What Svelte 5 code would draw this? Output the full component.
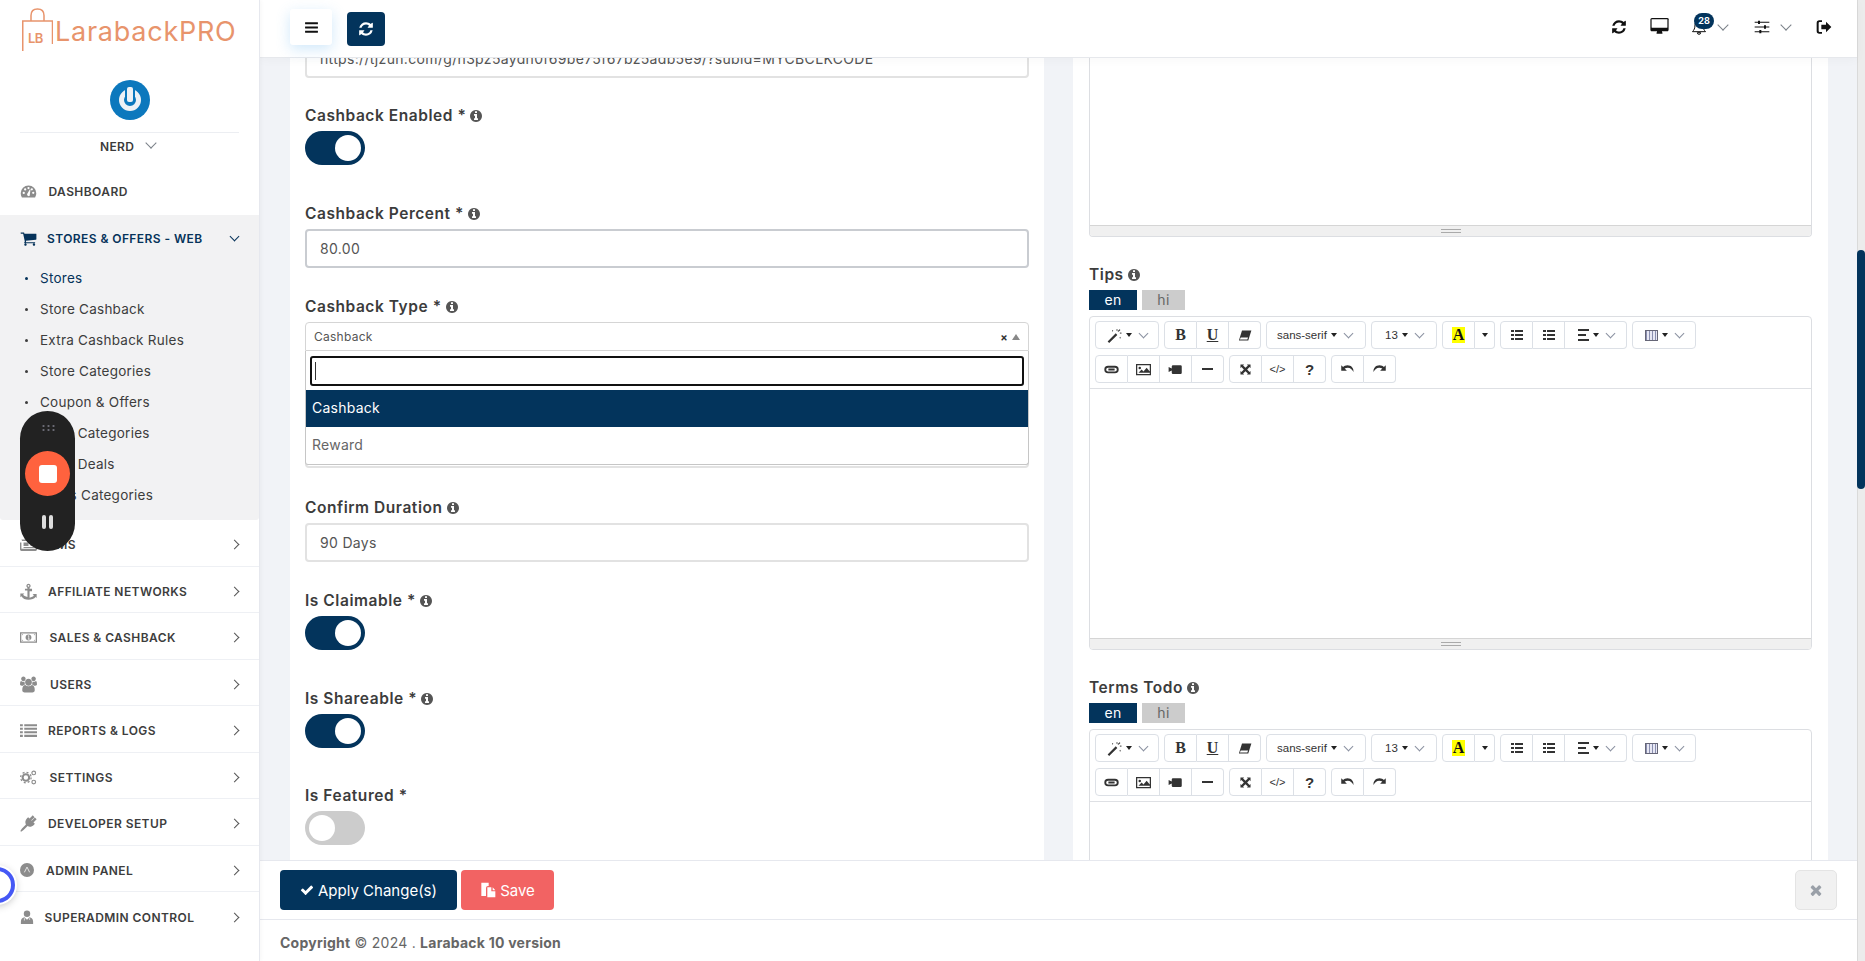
<script>
  const I = {
    info: ['0 0 1792 1792','M1152 1376v-160q0-14-9-23t-23-9h-96v-512q0-14-9-23t-23-9h-320q-14 0-23 9t-9 23v160q0 14 9 23t23 9h96v320h-96q-14 0-23 9t-9 23v160q0 14 9 23t23 9h448q14 0 23-9t9-23zm-128-896v-160q0-14-9-23t-23-9h-192q-14 0-23 9t-9 23v160q0 14 9 23t23 9h192q14 0 23-9t9-23zm640 416q0 209-103 385.5t-279.5 279.5-385.5 103-385.5-103-279.5-279.5-103-385.5 103-385.5 279.5-279.5 385.5-103 385.5 103 279.5 279.5 103 385.5z'],
    refresh: ['0 0 1792 1792','M1639 1056q0 5-1 7-64 268-268 434.5t-478 166.5q-146 0-282.5-55t-243.5-157l-129 129q-19 19-45 19t-45-19-19-45v-448q0-26 19-45t45-19h448q26 0 45 19t19 45-19 45l-137 137q71 66 161 102t187 36q134 0 250-65t186-179q11-17 53-117 8-23 30-23h192q13 0 22.5 9.5t9.5 22.5zm25-800v448q0 26-19 45t-45 19h-448q-26 0-45-19t-19-45 19-45l138-138q-148-137-349-137-134 0-250 65t-186 179q-11 17-53 117-8 23-30 23h-199q-13 0-22.5-9.5t-9.5-22.5v-7q65-268 270-434.5t480-166.5q146 0 284 55.5t245 156.5l130-129q19-19 45-19t45 19 19 45z'],
    bars: ['0 0 1792 1792','M1664 1344v128q0 26-19 45t-45 19h-1408q-26 0-45-19t-19-45v-128q0-26 19-45t45-19h1408q26 0 45 19t19 45zm0-512v128q0 26-19 45t-45 19h-1408q-26 0-45-19t-19-45v-128q0-26 19-45t45-19h1408q26 0 45 19t19 45zm0-512v128q0 26-19 45t-45 19h-1408q-26 0-45-19t-19-45v-128q0-26 19-45t45-19h1408q26 0 45 19t19 45z'],
    cart: ['0 0 1792 1792','M704 1536q0 52-38 90t-90 38-90-38-38-90 38-90 90-38 90 38 38 90zm896 0q0 52-38 90t-90 38-90-38-38-90 38-90 90-38 90 38 38 90zm128-1088v512q0 24-16.5 42.5t-40.5 21.5l-1044 122q13 60 13 70 0 16-24 64h920q26 0 45 19t19 45-19 45-45 19h-1024q-26 0-45-19t-19-45q0-11 8-31.5t16-36 21.5-40 15.5-29.5l-177-823h-204q-26 0-45-19t-19-45 19-45 45-19h256q16 0 28.5 6.5t19.5 15.5 13 24.5 8 26 5.5 29.5 4.5 26h1201q26 0 45 19t19 45z'],
    check: ['0 0 1792 1792','M1671 566q0 40-28 68l-724 724-136 136q-28 28-68 28t-68-28l-136-136-362-362q-28-28-28-68t28-68l136-136q28-28 68-28t68 28l294 295 656-657q28-28 68-28t68 28l136 136q28 28 28 68z'],
    times: ['0 0 1792 1792','M1490 1322q0 40-28 68l-136 136q-28 28-68 28t-68-28l-294-294-294 294q-28 28-68 28t-68-28l-136-136q-28-28-28-68t28-68l294-294-294-294q-28-28-28-68t28-68l136-136q28-28 68-28t68 28l294 294 294-294q28-28 68-28t68 28l136 136q28 28 28 68t-28 68l-294 294 294 294q28 28 28 68z'],
    users: ['0 0 1920 1792','M593 896q-162 5-265 128h-134q-82 0-138-40.5t-56-118.5q0-353 124-353 6 0 43.5 21t97.5 42.5 119 21.5q67 0 133-23-5 37-5 66 0 139 81 256zm1071 637q0 120-73 189.5t-194 69.5h-874q-121 0-194-69.5t-73-189.5q0-53 3.5-103.5t14-109 26.5-108.5 43-97.5 62-81 85.5-53.5 111.5-20q10 0 43 21.5t73 48 107 48 135 21.5 135-21.5 107-48 73-48 43-21.5q61 0 111.5 20t85.5 53.5 62 81 43 97.5 26.5 108.5 14 109 3.5 103.5zm-1024-1277q0 106-75 181t-181 75-181-75-75-181 75-181 181-75 181 75 75 181zm704 384q0 159-112.5 271.5t-271.5 112.5-271.5-112.5-112.5-271.5 112.5-271.5 271.5-112.5 271.5 112.5 112.5 271.5zm576 225q0 78-56 118.5t-138 40.5h-134q-103-123-265-128 81-117 81-256 0-29-5-66 66 23 133 23 59 0 119-21.5t97.5-42.5 43.5-21q124 0 124 353zm-128-609q0 106-75 181t-181 75-181-75-75-181 75-181 181-75 181 75 75 181z'],
    desktop: ['0 0 1920 1792','M1792 992v-832q0-13-9.5-22.5t-22.5-9.5h-1600q-13 0-22.5 9.5t-9.5 22.5v832q0 13 9.5 22.5t22.5 9.5h1600q13 0 22.5-9.5t9.5-22.5zm128-832v1088q0 66-47 113t-113 47h-544q0 37 16 77.5t32 71 16 43.5q0 26-19 45t-45 19h-512q-26 0-45-19t-19-45q0-14 16-44t32-70 16-78h-544q-66 0-113-47t-47-113v-1088q0-66 47-113t113-47h1632q66 0 113 47t47 113z'],
    gauge: ['0 0 24 24','M12 3.5A11 11 0 0 0 1 14.5c0 2.2.6 4.2 1.7 6h18.6a11 11 0 0 0 1.7-6 11 11 0 0 0-11-11zM5.3 15.6a1.6 1.6 0 1 1 0-3.2 1.6 1.6 0 0 1 0 3.2zm2-5a1.6 1.6 0 1 1 0-3.2 1.6 1.6 0 0 1 0 3.2zm4.7-1.9a1.6 1.6 0 1 1 0-3.2 1.6 1.6 0 0 1 0 3.2zm1.7 9.2a2.2 2.2 0 0 1-3.6-2.3l3.7-6.6 1 .3zm3-7.4a1.6 1.6 0 1 1 0-3.2 1.6 1.6 0 0 1 0 3.2zm2 5a1.6 1.6 0 1 1 0-3.2 1.6 1.6 0 0 1 0 3.2z'],
    news: ['0 0 24 24','M2 5h20a2 2 0 0 1 2 2v12a2 2 0 0 1-2 2H2a2 2 0 0 1-2-2V9h2v9h20V7H3zM5 9h7v5H5zM14 9h7v1.5h-7zM14 12h7v1.5h-7zM5 15.5h16V17H5z'],
    anchor: ['0 0 24 24','M12 1a3 3 0 0 0-1.500 5.600V8H7v2.500h3.500v9.300c-2.900-.3-5.300-1.600-6-3.400l1.700-1.700H.5v5.500l1.600-1.600C3.800 22 7.600 23.500 12 23.500s8.200-1.500 9.900-3.900l1.600 1.600v-5.500h-5.700l1.700 1.700c-.7 1.800-3.100 3.100-6 3.400v-9.300H17V8h-3.500V6.600A3 3 0 0 0 12 1zm0 1.800a1.200 1.200 0 1 1 0 2.400 1.200 1.200 0 0 1 0-2.400z'],
    money: ['0 0 26 24','M0 4h26v16H0zm2 2v12h22V6zm11 1.500c2.600 0 4.500 2 4.500 4.500s-1.900 4.500-4.500 4.500-4.500-2-4.500-4.500 1.900-4.500 4.500-4.500zM3 7v2l2-2zM23 7h-2l2 2zM3 15v2h2zM23 15l-2 2h2zM12 9v1h1v4h-1v1h3v-1h-1V9z'],
    list: ['0 0 24 24','M0 3h4v3H0zM6 3h18v3H6zM0 8h4v3H0zM6 8h18v3H6zM0 13h4v3H0zM6 13h18v3H6zM0 18h4v3H0zM6 18h18v3H6z'],
    plug: ['0 0 24 24','M23.500 6 19 10.500l2 2-1.500 1.500c-2.500 2.500-6 3.200-8.800 1.600L5 21.200 1.500 23.500l-1-1L2.800 19l5.600-5.700C6.800 10.500 7.500 7 10 4.500L11.500 3l2 2L18 .5 20.500 3 16 7.500l.5.5L21 3.500z'],
    logout: ['0 0 24 24','M9 4.500H5.500A1.500 1.500 0 0 0 4 6v12a1.500 1.500 0 0 0 1.500 1.500H9v2.500H5A4 4 0 0 1 1 18V6a4 4 0 0 1 4-4h4zM15 4l8 8-8 8v-4.500H8v-7h7z'],
    doc: ['0 0 24 24','M2 1h11v5h-1a3 3 0 0 0-3 3v12H2zM11 8h6v6h6v9H11zM19 8l4 4.500h-4z'],
    eraser: ['0 0 24 24','M8 4h15l-5 16H3zM6 15l-1.500 3.500h12l1.200-3.500z'],
    magic: ['0 0 24 24','M1 21.500 14 8.500l2.500 2.500L3.500 24zM16 1l1 2-1 2-1-2zM22 7l2 1-2 1-2-1zM9 3l1 1.500L9 6 8 4.500zM21 14l1 1.500-1 1.500-1-1.500zM20 2l1.500 1-3 3L17 5z'],
    link: ['0 0 24 24','M6.500 6h5.500v3H6.500a3 3 0 0 0 0 6H12v3H6.500a6 6 0 0 1 0-12zM12 6h5.500a6 6 0 0 1 0 12H12v-3h5.500a3 3 0 0 0 0-6H12zM7 10.500h10v3H7z'],
    picture: ['0 0 24 24','M0 3h24v18H0zm2 2v14h20V5zM4 17l5-5 3 3 5-6 5 6v2zM6 7.500a2 2 0 1 1 0 4 2 2 0 0 1 0-4z'],
    video: ['0 0 24 24','M8 5h12a2 2 0 0 1 2 2v10a2 2 0 0 1-2 2H8a2 2 0 0 1-2-2v-3.500L1 16V8l5 2.500V7a2 2 0 0 1 2-2z'],
    full: ['0 0 24 24','M1 1h8L6.800 3.200 12 8.400l5.200-5.200L15 1h8v8l-2.200-2.200L15.600 12l5.200 5.200L23 15v8h-8l2.200-2.200L12 15.600l-5.200 5.200L9 23H1v-8l2.200 2.200L8.400 12 3.200 6.800 1 9z'],
    undo: ['0 0 24 24','M2 5v9h9l-3.500-3.500C9 9.500 10.500 9 12.500 9c4 0 7 2.500 9 7 .8-6.500-3.500-11-9.500-11-3 0-5.500 1.200-7 2.800z'],
    redo: ['0 0 24 24','M22 5v9h-9l3.500-3.500C15 9.500 13.500 9 11.500 9c-4 0-7 2.500-9 7-.8-6.500 3.500-11 9.500-11 3 0 5.500 1.200 7 2.800z']
  };
  const rows = [
    ['news','CMS',10],
    ['anchor','AFFILIATE NETWORKS',11],
    ['money','SALES & CASHBACK',12.5],
    ['users','USERS',13],
    ['list','REPORTS & LOGS',11],
    ['cogs','SETTINGS',12.5],
    ['plug','DEVELOPER SETUP',11],
    ['admin','ADMIN PANEL',12],
    ['md','SUPERADMIN CONTROL',10.5]
  ];
  const sub = ['Stores','Store Cashback','Extra Cashback Rules','Store Categories','Coupon & Offers','Offer Categories','Offer Deals','Deals Categories'];
</script>

{#snippet ic(name, cls)}
  <svg class={cls} viewBox={I[name][0]} aria-hidden="true"><path d={I[name][1]} /></svg>
{/snippet}

{#snippet infoLabel(text, info)}
  <div class="label"><span class="ltext">{text}</span>{#if info}{@render ic('info','info')}{/if}</div>
{/snippet}

{#snippet editorToolbar()}
  <div class="toolbar">
    <div class="trow">
      <div class="grp">
        <span class="tb wide">{@render ic('magic','tico')}<i class="caret"></i><i class="chev"></i></span>
      </div>
      <div class="grp">
        <span class="tb"><b class="serif">B</b></span>
        <span class="tb"><b class="serif u">U</b></span>
        <span class="tb">{@render ic('eraser','tico')}</span>
      </div>
      <div class="grp">
        <span class="tb font"><span class="ft">sans-serif</span><i class="caret"></i><i class="chev"></i></span>
      </div>
      <div class="grp">
        <span class="tb size"><span class="ft">13</span><i class="caret"></i><i class="chev"></i></span>
      </div>
      <div class="grp">
        <span class="tb"><b class="serif hl">A</b></span>
        <span class="tb narrow"><i class="caret solo"></i></span>
      </div>
      <div class="grp">
        <span class="tb"><span class="ul"><i></i><i></i><i></i></span></span>
        <span class="tb"><span class="ul"><i></i><i></i><i></i></span></span>
        <span class="tb para"><span class="al"><i></i><i></i><i></i></span><i class="caret"></i><i class="chev"></i></span>
      </div>
      <div class="grp">
        <span class="tb wide"><span class="tbl"></span><i class="caret"></i><i class="chev"></i></span>
      </div>
    </div>
    <div class="trow">
      <div class="grp">
        <span class="tb">{@render ic('link','tico')}</span>
        <span class="tb">{@render ic('picture','tico')}</span>
        <span class="tb">{@render ic('video','tico')}</span>
        <span class="tb"><span class="hr"></span></span>
      </div>
      <div class="grp">
        <span class="tb">{@render ic('full','tico small')}</span>
        <span class="tb"><span class="code">&lt;/&gt;</span></span>
        <span class="tb"><b class="q">?</b></span>
      </div>
      <div class="grp">
        <span class="tb">{@render ic('undo','tico')}</span>
        <span class="tb">{@render ic('redo','tico')}</span>
      </div>
    </div>
  </div>
{/snippet}

<div class="app">
  <aside class="side">
    <div class="logo">
      <svg class="bag" viewBox="0 0 31 43" aria-hidden="true">
        <path d="M.75 43V13H9M9 13V7.500C9 3.500 11.500 1 15.500 1S22 3.500 22 7.500V13M9 13H22M22 13h8.500v23" />
      </svg>
      <span class="lb">LB</span>
      <span class="logotext">LarabackPRO</span>
    </div>
    <div class="avatar"><span class="avring"></span><span class="avbar"></span></div>
    <div class="user"><span>NERD</span><i class="chev big"></i></div>

    <a class="mi dash">{@render ic('gauge','mico g')}<span>DASHBOARD</span></a>
    <div class="open">
      <a class="mi active">{@render ic('cart','mico navy')}<span>STORES &amp; OFFERS - WEB</span><i class="arrow down"></i></a>
      <ul class="sub">
        {#each sub as s, i}
          <li class:cur={i === 0}>{s}</li>
        {/each}
      </ul>
    </div>
    <div class="rows">
      {#each rows as r}
        <a class="mi row">
          {#if r[0] === 'cogs'}
            <svg class="mico g" viewBox="0 0 26 24" aria-hidden="true"><g fill="none" stroke="#8c8c8c"><circle cx="9" cy="12" r="5" stroke-width="3.200"/><circle cx="9" cy="12" r="8" stroke-width="2" stroke-dasharray="3 3.300"/><circle cx="21" cy="5" r="2.800" stroke-width="1.800"/><circle cx="21" cy="19" r="2.800" stroke-width="1.800"/></g></svg>
          {:else if r[0] === 'admin'}
            <svg class="mico g mini" viewBox="0 0 24 24" aria-hidden="true"><circle cx="12" cy="12" r="12" fill="#8c8c8c"/><path d="M7.500 16 12 7l4.500 9" fill="none" stroke="#fff" stroke-width="1.300"/></svg>
          {:else if r[0] === 'md'}
            <svg class="mico g mini" viewBox="0 0 24 24" aria-hidden="true"><circle cx="12" cy="6.500" r="5.500" fill="#8c8c8c"/><path d="M1.500 24v-4c0-5 3-7 6-7.500l4.500 4 4.500-4c3 .5 6 2.500 6 7.500v4z" fill="#8c8c8c"/><path d="M7.500 14v4M16.500 14v3" stroke="#fff" stroke-width="1.200"/></svg>
          {:else}
            {@render ic(r[0],'mico g')}
          {/if}
          <span style:margin-left="{r[2]}px">{r[1]}</span><i class="arrow"></i>
        </a>
      {/each}
    </div>
  </aside>

  <div class="main">
    <header class="top">
      <span class="hbtn">{@render ic('bars','h14')}</span>
      <span class="rbtn">{@render ic('refresh','h16 white')}</span>
      <div class="tright">
        <span class="t ref">{@render ic('refresh','h16')}</span>
        <span class="t mon">{@render ic('desktop','h19')}</span>
        <span class="t bell">
          <svg class="h16" viewBox="0 0 24 24" aria-hidden="true"><path d="M12 2.500c-3.500 0-6 2.500-6 6 0 6-1.500 8-3.800 10.500h19.600C19.500 16.500 18 14.500 18 8.500c0-3.500-2.500-6-6-6zM9.500 20.500a2.500 2.500 0 0 0 5 0z" fill="none" stroke="#111" stroke-width="1.500"/></svg>
          <span class="badge">28</span>
          <i class="chev big"></i>
        </span>
        <span class="t slid">
          <svg class="h16" viewBox="0 0 24 24" aria-hidden="true"><path d="M1 5h22M1 12h22M1 19h22" stroke="#111" stroke-width="1.600"/><path d="M6 2.500h3v5H6zM15 9.500h3v5h-3zM8 16.500h3v5H8z" fill="#111"/></svg>
          <i class="chev big"></i>
        </span>
        <span class="t out">{@render ic('logout','h16')}</span>
      </div>
    </header>

    <div class="content">
      <section class="card left">
        <div class="grpf mb25 urlwrap">
          <div class="input"><span class="clip">https://tjzuh.com/g/n3pz5aydn0f69be75f67bz5adb5e9/?subid=MYCBCLKCODE</span></div>
        </div>
        <div class="grpf mb36">
          {@render infoLabel('Cashback Enabled *', true)}
          <span class="sw on"><span></span></span>
        </div>
        <div class="grpf mb26">
          {@render infoLabel('Cashback Percent *', true)}
          <div class="input hard">80.00</div>
        </div>
        <div class="grpf mb27 selgroup">
          {@render infoLabel('Cashback Type *', true)}
          <div class="select"><span>Cashback</span><em>×</em><i class="up"></i></div>
          <div class="ghost"></div>
          <div class="drop">
            <div class="search"><span class="cursor"></span></div>
            <div class="opt sel">Cashback</div>
            <div class="opt">Reward</div>
          </div>
        </div>
        <div class="grpf mb26">
          {@render infoLabel('Confirm Duration', true)}
          <div class="input">90 Days</div>
        </div>
        <div class="grpf mb36">
          {@render infoLabel('Is Claimable *', true)}
          <span class="sw on"><span></span></span>
        </div>
        <div class="grpf mb35">
          {@render infoLabel('Is Shareable *', true)}
          <span class="sw on"><span></span></span>
        </div>
        <div class="grpf">
          {@render infoLabel('Is Featured *', false)}
          <span class="sw"><span></span></span>
        </div>
      </section>

      <section class="card right">
        <div class="ed topEd">
          <div class="edbody"></div>
          <div class="status"><i></i></div>
        </div>
        <div class="block">
          {@render infoLabel('Tips', true)}
          <div class="tabs"><span class="tab act">en</span><span class="tab">hi</span></div>
          <div class="ed">
            {@render editorToolbar()}
            <div class="edbody tall"></div>
            <div class="status"><i></i></div>
          </div>
        </div>
        <div class="block">
          {@render infoLabel('Terms Todo', true)}
          <div class="tabs"><span class="tab act">en</span><span class="tab">hi</span></div>
          <div class="ed">
            {@render editorToolbar()}
            <div class="edbody tall"></div>
          </div>
        </div>
      </section>
    </div>

    <div class="actions">
      <span class="b apply">{@render ic('check','b14')}Apply Change(s)</span>
      <span class="b save">{@render ic('doc','b16')}Save</span>
      <span class="close">{@render ic('times','x16')}</span>
    </div>
    <footer class="foot"><b>Copyright</b> © 2024 . <b>Laraback 10 version</b></footer>
  </div>

  <div class="bar"><span></span></div>

  <div class="rec">
    <span class="dots"></span>
    <span class="stop"><span></span></span>
    <span class="pause"><i></i><i></i></span>
  </div>
  <div class="ring"></div>
</div>

<style>
  :global(body) { margin: 0; background: #f1f3f7; overflow: hidden; }
  .app { position: relative; width: 1865px; height: 961px; display: flex; overflow: hidden; font-family: Inter, "Noto Sans", sans-serif; color: #3a3a3a; }
  svg { fill: currentColor; display: block; flex: none; }
  i { display: block; font-style: normal; }

  .side { width: 259px; flex: none; background: #fff; border-right: 1px solid #e6e8ee; box-shadow: 1px 0 4px rgba(0,0,0,.04); z-index: 3; }
  .logo { position: relative; height: 80px; }
  .bag { position: absolute; left: 22px; top: 8px; width: 31px; height: 43px; fill: none; stroke: #e8946c; stroke-width: 1.500; }
  .lb { position: absolute; left: 28px; top: 30px; font-size: 13px; font-weight: 600; color: #e8946c; letter-spacing: -.5px; }
  .logotext { position: absolute; left: 55px; top: 15px; font-size: 27px; line-height: 34px; color: #e8946c; letter-spacing: .75px; }
  .avatar { position: relative; width: 40px; height: 40px; margin: 0 auto; border-radius: 50%; background: #0c78bd; }
  .avring { position: absolute; left: 9px; top: 9px; width: 22px; height: 22px; box-sizing: border-box; border-radius: 50%; border: 5px solid #eef2f6; }
  .avbar { position: absolute; left: 17px; top: 7px; width: 6px; height: 15px; background: #eef2f6; border-radius: 2px; box-shadow: 0 0 0 2px #0c78bd; }
  .user { margin: 12px 20px 0; height: 38px; border-top: 1px solid #eceef2; display: flex; align-items: center; gap: 13px; font-size: 12px; font-weight: 600; letter-spacing: .35px; padding: 0 0 10px 80px; box-sizing: border-box; white-space: nowrap; }
  .user .chev { margin-top: -7px; }

  .chev { width: 6px; height: 6px; border-right: 1px solid #7a8088; border-bottom: 1px solid #7a8088; transform: rotate(45deg); margin-top: -4px; }
  .chev.big { width: 7px; height: 7px; }
  a.mi { display: flex; align-items: center; text-decoration: none; color: #3d3d3d; font-size: 12px; font-weight: 600; letter-spacing: .42px; padding: 0 20px; box-sizing: border-box; white-space: nowrap; }
  a.mi.dash { height: 45px; padding-bottom: 2px; }
  .dash span { margin-left: 11.500px; }
  .open { background: #f2f2f3; height: 305px; border-radius: 0 0 3px 3px; }
  a.mi.active { height: 48px; color: #06335a; padding-bottom: 2px; }
  .active span { margin-left: 10px; }
  .mico { width: 17px; height: 17px; flex: none; }
  .g { color: #8c8c8c; }
  .navy { color: #06335a; }
  .arrow { margin-left: auto; margin-right: 1px; width: 6px; height: 6px; border-right: 1.200px solid #555; border-top: 1.200px solid #555; transform: rotate(45deg); }
  .arrow.down { transform: rotate(135deg); margin-top: -4px; margin-right: 1.500px; border-color: #06335a; }
  .sub { list-style: none; margin: 0; padding: 0 0 0 40px; }
  .sub li { position: relative; height: 31px; line-height: 31px; font-size: 13.500px; color: #3d3d3d; letter-spacing: .25px; }
  .sub li::before { content: ""; position: absolute; left: -15px; top: 14px; width: 3px; height: 3px; border-radius: 50%; background: #3d3d3d; }
  .sub li.cur { color: #06335a; }
  .sub li.cur::before { background: #06335a; }
  .rows { display: flex; flex-direction: column; }
  a.mi.row { height: 46.500px; border-bottom: 1px solid #eef0f4; padding-top: 4px; }
  .mi.row:last-child { border-bottom: 0; }
  .mico.mini { width: 14px; height: 14px; }

  .main { flex: 1; display: flex; flex-direction: column; min-width: 0; height: 961px; }
  .top { position: relative; z-index: 2; height: 58px; flex: none; background: #fff; border-bottom: 1px solid #e6e8ec; box-shadow: 0 2px 10px rgba(0,0,0,.03); box-sizing: border-box; display: flex; align-items: flex-start; padding: 0 0 0 30px; color: #111; }
  .hbtn { width: 42px; height: 36px; margin-top: 9px; background: #fff; border-radius: 3px; box-shadow: 0 4px 14px rgba(100,180,240,.3); display: flex; align-items: center; justify-content: center; }
  .rbtn { width: 38px; height: 34px; margin: 12px 0 0 15px; background: #03345c; border-radius: 4px; display: flex; align-items: center; justify-content: center; }
  .h16 { width: 16px; height: 16px; }
  .h14 { width: 15px; height: 15px; }
  .h19 { width: 19px; height: 17px; }
  .white { color: #fff; }
  .tright { margin-left: auto; position: relative; width: 260px; height: 58px; }
  .t { position: absolute; top: 19px; display: flex; align-items: center; }
  .ref { left: 14px; } .mon { left: 52.500px; top: 18px; } .bell { left: 94px; } .slid { left: 157px; } .out { left: 219px; }
  .badge { position: absolute; left: 3px; top: -6px; min-width: 20px; height: 16px; border-radius: 8px; background: #03345c; color: #fff; font-size: 9px; font-weight: 700; text-align: center; line-height: 16px; }
  .bell .chev { margin-left: 11.500px; }
  .slid .chev { margin-left: 11.500px; }

  .content { flex: 1; min-height: 0; overflow: hidden; display: flex; gap: 29px; padding: 0 29px 0 30px; align-items: stretch; }
  .card { background: #fff; box-sizing: border-box; flex: none; overflow: hidden; }
  .card.left { width: 754px; padding: 0 15px; }
  .card.right { width: 755px; padding: 0 16px; }
  .mb25 { margin-bottom: 25px; } .mb26 { margin-bottom: 26px; } .mb27 { margin-bottom: 27px; } .mb35 { margin-bottom: 35px; } .mb36 { margin-bottom: 36px; }
  .urlwrap { margin-top: -19px; height: 39px; }
  .label { height: 22px; box-sizing: border-box; padding-top: 2px; margin-bottom: 6px; font-size: 15.500px; font-weight: 600; letter-spacing: .55px; color: #3c3c3c; display: flex; align-items: center; white-space: nowrap; }
  .info { width: 14px; height: 14px; margin-left: 3px; margin-top: 1px; color: #555; }
  .input { height: 39px; box-sizing: border-box; border: 2px solid #e2e2e2; border-radius: 4px; padding: 0 13px; line-height: 35px; font-size: 14px; color: #555; letter-spacing: .33px; white-space: nowrap; overflow: hidden; }
  .input.hard { border-color: #c9ccd1; }
  .clip { white-space: nowrap; }
  .sw { display: block; position: relative; width: 60px; height: 34px; border-radius: 17px; background: #ccc; }
  .sw span { position: absolute; left: 4px; top: 4px; width: 26px; height: 26px; border-radius: 50%; background: #fff; }
  .sw.on { background: #03345c; }
  .sw.on span { left: 30px; }

  .selgroup { position: relative; height: 174px; }
  .select { height: 29px; box-sizing: border-box; border: 1px solid #d5d5d5; border-radius: 4px 4px 0 0; display: flex; align-items: center; padding: 0 8px; font-size: 12px; color: #555; letter-spacing: .25px; }
  .select em { margin-left: auto; font-style: normal; font-weight: 700; font-size: 11px; color: #333; margin-right: 4px; }
  .up { width: 0; height: 0; border-left: 4.500px solid transparent; border-right: 4.500px solid transparent; border-bottom: 6px solid #888; }
  .ghost { position: absolute; left: 0; right: 0; bottom: 0; height: 39px; box-sizing: border-box; border: 2px solid #e2e2e2; border-radius: 4px; }
  .drop { position: absolute; left: 0; right: 0; top: 57px; height: 114px; box-sizing: border-box; background: #fff; border: 1px solid #c6c6c6; border-top: 0; border-radius: 0 0 3px 3px; padding-top: 5px; }
  .search { margin: 0 4px 4px; height: 30px; box-sizing: border-box; border: 2px solid #111; border-radius: 3px; display: flex; align-items: center; padding-left: 3px; }
  .cursor { width: 1px; height: 18px; background: #333; }
  .opt { height: 37px; line-height: 35px; padding: 0 6px; font-size: 14px; color: #666; letter-spacing: .25px; }
  .opt.sel { background: #03345c; color: #fff; }

  .ed { border: 1px solid #dcdee2; border-radius: 4px; overflow: hidden; }
  .topEd { margin-top: -1px; height: 180px; box-sizing: border-box; display: flex; flex-direction: column; border-top: 0; border-radius: 0 0 4px 4px; }
  .topEd .edbody { flex: 1; }
  .edbody.tall { height: 249px; }
  .status { height: 10px; background: #f0f0f0; border-top: 1px solid #d5d5d5; display: flex; justify-content: center; align-items: center; }
  .status i { width: 20px; height: 4px; border-top: 1px solid #aaa; border-bottom: 1px solid #aaa; box-sizing: border-box; }
  .block { margin-top: 25px; }
  .tabs { display: flex; gap: 5px; margin-bottom: 6px; }
  .tab { width: 43px; height: 20px; line-height: 20px; text-align: center; background: #ccc; color: #666; font-size: 14px; letter-spacing: .3px; }
  .tab.act { width: 48px; background: #03345c; color: #fff; }
  .toolbar { display: flex; flex-direction: column; gap: 6px; padding: 4px 5px 5px; border-bottom: 1px solid #dee0e4; }
  .trow { display: flex; gap: 5px; align-items: flex-start; }
  .grp { display: flex; }
  .tb { width: 32px; height: 28px; box-sizing: border-box; border: 1px solid #dce0e6; border-left-width: 0; display: flex; align-items: center; justify-content: center; gap: 5px; color: #333; }
  .tb:first-child { width: 33px; border-left-width: 1px; border-radius: 4px 0 0 4px; }
  .tb:last-child { border-radius: 0 4px 4px 0; }
  .tb:only-child { border-radius: 4px; }
  .tb.wide { width: 64px; }
  .tb.font { width: 100px; justify-content: flex-start; padding-left: 10px; }
  .tb.size { width: 66px; }
  .tb.narrow { width: 20px; }
  .tb.para { width: 62px; }
  .tico { width: 15px; height: 15px; color: #333; }
  .tico.small { width: 11px; height: 11px; }
  .serif { font-family: "Liberation Serif", serif; font-size: 16px; color: #333; line-height: 1; }
  .u { text-decoration: underline; }
  .hl { background: #ff0; color: #111; padding: 0 1px; }
  .q { font-size: 15px; font-family: "Liberation Sans", sans-serif; }
  .code { font-family: "Liberation Sans", sans-serif; font-size: 11px; }
  .ft { font-family: "Liberation Sans", sans-serif; font-size: 11.500px; color: #333; }
  .caret { width: 0; height: 0; border-left: 3px solid transparent; border-right: 3px solid transparent; border-top: 4px solid #222; margin-left: -1px; }
  .caret.solo { margin: 0; }
  .tb .chev { border-color: #8a90a0; margin-top: -4px; margin-left: 3px; }
  .ul { display: flex; flex-direction: column; gap: 2px; width: 12px; }
  .ul i { height: 2px; background: linear-gradient(90deg, #333 0 3px, transparent 3px 4px, #333 4px); }
  .al { display: flex; flex-direction: column; gap: 3px; width: 11px; }
  .al i { height: 2px; background: #333; }
  .al i:nth-child(2) { width: 8px; }
  .tbl { width: 13px; height: 11px; box-sizing: border-box; border: 1px solid #667; background: repeating-linear-gradient(90deg, #8a8fb0 0 1px, #e8e8f4 1px 3px), #eee; }
  .hr { width: 11px; height: 2px; background: #333; }

  .actions { position: relative; z-index: 2; height: 60px; flex: none; box-sizing: border-box; background: #fff; border-top: 1px solid #e6e8ee; border-bottom: 1px solid #e6e8ee; display: flex; align-items: center; padding: 0 20px; gap: 4px; }
  .b { height: 40px; display: flex; align-items: center; justify-content: center; gap: 4px; border-radius: 4px; color: #fff; font-size: 15px; box-sizing: border-box; }
  .apply { width: 177px; background: #03345c; }
  .save { width: 93px; background: #f26363; }
  .b14 { width: 14px; height: 14px; }
  .b16 { width: 16px; height: 16px; }
  .close { margin-left: auto; width: 42px; height: 40px; box-sizing: border-box; background: #f1f1f1; border: 1px solid #e4e4e4; border-radius: 5px; display: flex; align-items: center; justify-content: center; color: #9aa0a8; }
  .x16 { width: 16px; height: 16px; }
  .foot { height: 41px; flex: none; background: #fff; padding-left: 20px; line-height: 45px; font-size: 14px; color: #666; letter-spacing: .24px; }
  .foot b { font-weight: 700; }

  .bar { width: 8px; flex: none; background: #ececec; border-left: 1px solid #dadada; box-sizing: border-box; display: flex; flex-direction: column; }
  .bar span { display: block; margin: 250px 0 0 -1px; height: 239px; background: #03345c; border-radius: 4px; }

  .rec { position: absolute; z-index: 5; left: 20px; top: 411px; width: 55px; height: 140px; border-radius: 28px; background: #222; }
  .dots { position: absolute; left: 21px; top: 13px; width: 14px; height: 8px; background-image: radial-gradient(circle, #6b6b75 1px, transparent 1.200px); background-size: 5px 4px; }
  .stop { position: absolute; left: 5px; top: 40px; width: 45px; height: 45px; border-radius: 50%; background: #ff623e; display: flex; align-items: center; justify-content: center; }
  .stop span { width: 18px; height: 18px; border-radius: 3px; background: #fff; }
  .pause { position: absolute; left: 22px; top: 104px; display: flex; gap: 3px; }
  .pause i { width: 4px; height: 14px; border-radius: 2px; background: #ddd; }
  .ring { position: absolute; z-index: 6; left: -21px; top: 867px; width: 36px; height: 36px; box-sizing: border-box; border-radius: 50%; border: 4px solid #4558f5; background: #fff; box-shadow: 0 0 0 2px #fff, 0 2px 8px rgba(0,0,0,.3); }
</style>
